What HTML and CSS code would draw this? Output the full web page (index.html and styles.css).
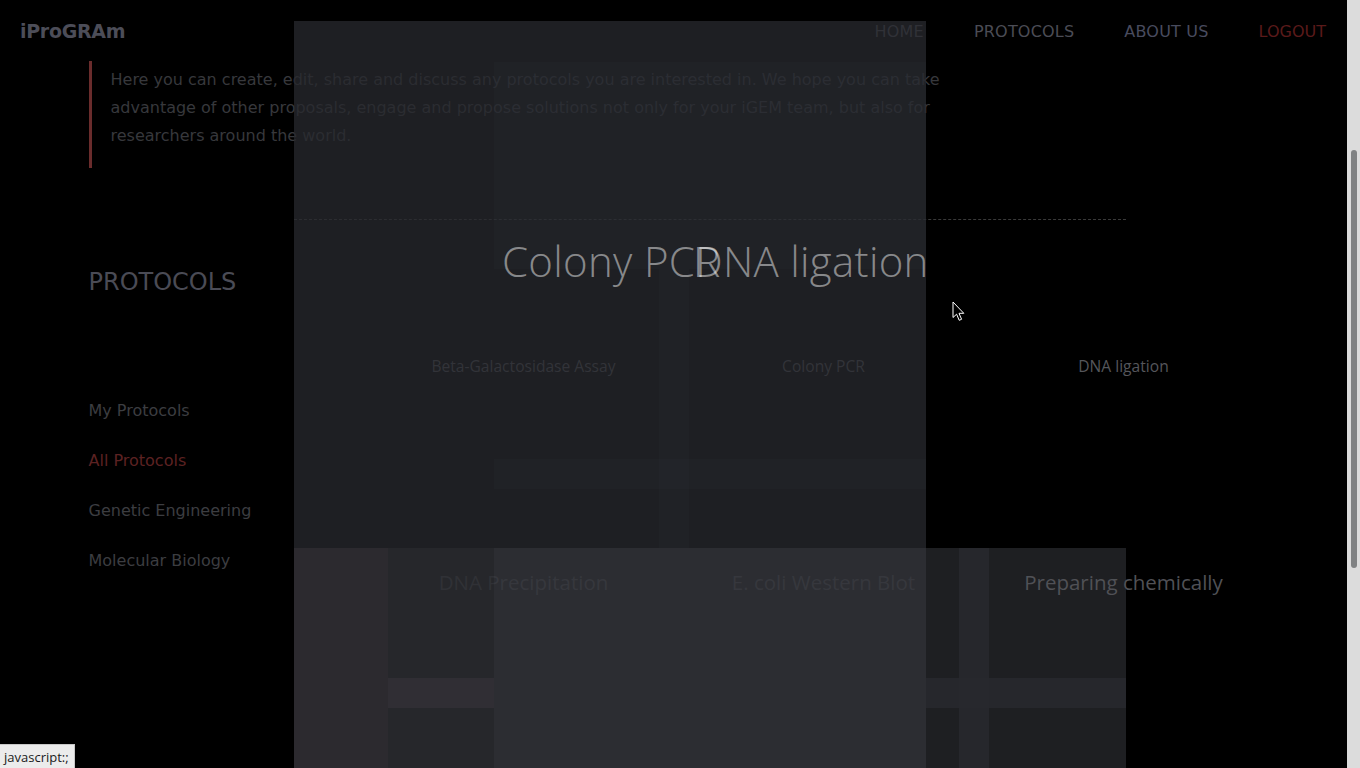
FILE: index.html
```html
<!DOCTYPE html>
<html lang="en">
<head>
<meta charset="utf-8">
<title>iProGRAm - Protocols</title>
<link rel="stylesheet" href="styles.css">
</head>
<body>
<div class="page">
  <header class="topbar">
    <a class="logo" href="#">iProGRAm</a>
    <nav class="nav">
      <a href="#" class="nav-link">HOME</a>
      <a href="#" class="nav-link">PROTOCOLS</a>
      <a href="#" class="nav-link nav-about">ABOUT US</a>
      <a href="#" class="nav-link nav-logout">LOGOUT</a>
    </nav>
  </header>

  <main class="container">
    <blockquote class="intro">
      <p>Here you can create, edit, share and discuss any protocols you are interested in. We hope you can take advantage of other proposals, engage and propose solutions not only for your iGEM team, but also for researchers around the world.</p>
    </blockquote>

    <div class="row">
      <aside class="sidebar">
        <h2 class="side-title">PROTOCOLS</h2>
        <ul class="side-list">
          <li><a href="#">My Protocols</a></li>
          <li><a href="#" class="active">All Protocols</a></li>
          <li><a href="#">Genetic Engineering</a></li>
          <li><a href="#">Molecular Biology</a></li>
        </ul>
      </aside>
      <section class="grid">
        <div class="card"><span class="card-title sm">Beta-Galactosidase Assay</span></div>
        <div class="card"><span class="card-title sm">Colony PCR</span></div>
        <div class="card"><span class="card-title sm">DNA ligation</span></div>
        <div class="card"><span class="card-title lg">DNA Precipitation</span></div>
        <div class="card"><span class="card-title lg">E. coli Western Blot</span></div>
        <div class="card"><span class="card-title lg top">Preparing chemically</span></div>
      </section>
    </div>
  </main>

  <div class="fx">
    <div class="dash"></div>
    <div class="pa"></div>
    <div class="pa-tint t1"></div>
    <div class="pa-tint t2"></div>
    <div class="pa-tint t3"></div>
    <div class="pb b1"></div>
    <div class="pb b2"></div>
    <div class="pb b2band"></div>
    <div class="pb b3"></div>
    <div class="pb b4"></div>
    <div class="pb b4strip"></div>
    <div class="pb b4band"></div>
    <div class="big big1">Colony PCR</div>
    <div class="big big2">DNA ligation</div>
  </div>

  <svg class="cursor" width="14" height="21" viewBox="0 0 14 21">
    <path d="M1 1 L1 16.5 L4.6 13.2 L7.2 19.3 L9.6 18.3 L7 12.3 L11.8 12.3 Z" fill="#000" stroke="#fff" stroke-width="1"/>
  </svg>
</div>
<div class="scrollbar"><div class="thumb"></div></div>
<div class="status">javascript:;</div>
</body>
</html>
```

FILE: styles.css
```css
html, body {
  margin: 0;
  padding: 0;
  background: #000;
  overflow: hidden;
  height: 768px;
}
.page {
  width: 1347px;
  height: 768px;
  position: relative;
  overflow: hidden;
  font-family: "DejaVu Sans", sans-serif;
}
a { text-decoration: none; }

.topbar {
  height: 61px;
  display: flex;
  align-items: center;
  justify-content: space-between;
  padding: 0 21px 0 20px;
}
.logo {
  font-family: "DejaVu Sans", sans-serif;
  font-weight: bold;
  font-size: 19px;
  letter-spacing: -0.3px;
  color: #4c4d58;
  margin-top: 1px;
}
.nav {
  display: flex;
  gap: 50px;
  margin-top: 1px;
}
.nav-link {
  font-size: 16px;
  letter-spacing: 0.2px;
  color: #4b4c55;
}
.nav-about { color: #484b5e; }
.nav-logout { color: #5a1a1a; letter-spacing: 0; }

.container {
  width: 1170px;
  margin: 0 auto;
}
.intro {
  margin: 0;
  width: 850px;
  border-left: 3px solid #6a2c2c;
  padding: 5px 0 18px 19px;
}
.intro p {
  margin: 0;
  font-size: 16px;
  line-height: 28px;
  color: #37383c;
}

.row {
  display: flex;
  margin-top: 99px;
}
.sidebar {
  width: 300px;
  flex: none;
}
.side-title {
  margin: 0;
  font-weight: normal;
  font-size: 24px;
  line-height: 28px;
  color: #4a4b55;
  padding-top: 1px;
}
.side-list {
  list-style: none;
  margin: 89px 0 0;
  padding: 0;
}
.side-list li {
  height: 50px;
  display: flex;
  align-items: center;
}
.side-list a {
  font-size: 16px;
  color: #3c3d41;
}
.side-list a.active { color: #5c2222; }

.grid {
  width: 870px;
  padding-top: 7px;
  display: grid;
  grid-template-columns: repeat(3, 270px);
  grid-auto-rows: 185px;
  gap: 30px;
}
.card {
  display: flex;
  align-items: center;
  justify-content: center;
}
.card-title {
  font-family: "Open Sans", sans-serif;
  color: #55565b;
  white-space: nowrap;
}
.card-title.sm { font-size: 15.6px; margin-top: -2px; }
.card-title.lg { font-size: 20.5px; }
.card-title.top {
  position: relative;
  z-index: 4;
  color: #505156;
}

/* transition ghost layers */
.fx > div { position: absolute; }
.dash {
  left: 294px;
  top: 219px;
  width: 832px;
  border-top: 1px dashed #3a3a3a;
  z-index: 1;
}
.pa {
  left: 294px; top: 21px; width: 632px; height: 527px;
  background: rgba(40, 41, 46, 0.76);
  z-index: 2;
}
.pa-tint {
  background: rgba(50, 58, 66, 0.12);
  z-index: 2;
}
.t1 { left: 494px; top: 62px; width: 432px; height: 207px; }
.t2 { left: 659px; top: 269px; width: 30px; height: 279px; }
.t3 { left: 494px; top: 459px; width: 432px; height: 30px; }
.pb { z-index: 2; top: 548px; height: 220px; }
.b1 { left: 294px; width: 94px; background: rgba(50, 48, 53, 0.88); }
.b2 { left: 388px; width: 106px; background: rgba(43, 44, 49, 0.88); }
.b2band { left: 388px; width: 106px; top: 678px !important; height: 30px !important; background: rgba(50, 48, 53, 0.88); z-index: 3 !important; }
.b3 { left: 494px; width: 432px; background: rgba(50, 51, 57, 0.88); }
.b4 { left: 926px; width: 200px; background: rgba(34, 35, 39, 0.88); }
.b4strip { left: 959px; width: 30px; background: rgba(40, 41, 45, 0.88); z-index: 3 !important; }
.b4band { left: 926px; width: 200px; top: 678px !important; height: 30px !important; background: rgba(40, 41, 45, 0.88); z-index: 3 !important; }

.big {
  z-index: 3;
  top: 240px;
  font-family: "Open Sans", sans-serif;
  font-weight: 300;
  font-size: 42px;
  line-height: 42px;
  letter-spacing: 0.3px;
  color: rgba(255, 255, 255, 0.47);
  white-space: nowrap;
}
.big1 { left: 502px; }
.big2 { left: 693px; }

.cursor {
  position: absolute;
  left: 952px;
  top: 301px;
  z-index: 6;
}

.scrollbar {
  position: absolute;
  right: 0;
  top: 0;
  width: 13px;
  height: 768px;
  background: #dcdcdc;
}
.thumb {
  position: absolute;
  left: 4px;
  top: 150px;
  width: 6px;
  height: 418px;
  border-radius: 3px;
  background: #808283;
}

.status {
  position: absolute;
  left: 0;
  bottom: 0;
  height: 23px;
  padding: 0 5px 0 4px;
  display: flex;
  align-items: center;
  background: #ececec;
  border-top: 1px solid #c8c8c8;
  border-right: 1px solid #c8c8c8;
  font-family: "Open Sans", sans-serif;
  font-size: 13px;
  color: #1a1a1a;
  z-index: 7;
}
```
